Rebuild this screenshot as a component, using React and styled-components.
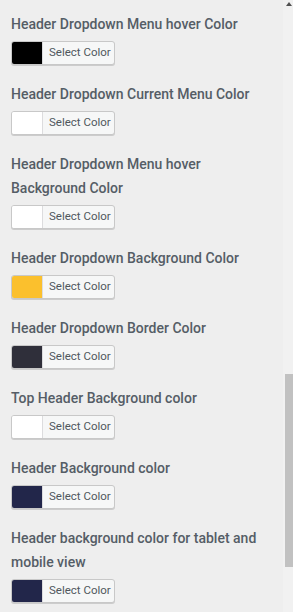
import React from 'react';
import styled, { createGlobalStyle } from 'styled-components';

const GlobalStyle = createGlobalStyle`
  html, body {
    margin: 0;
    padding: 0;
    background: #eeeeee;
  }
  body {
    font-family: Roboto, "Noto Sans", Arial, sans-serif;
  }
`;

const Frame = styled.div`
  display: flex;
  width: 293px;
  height: 612px;
  overflow: hidden;
`;

const Panel = styled.div`
  flex: 1;
  background: #eeeeee;
  padding: 12px 0 0 11px;
`;

const Control = styled.div`
  margin-bottom: 17px;
`;

const Label = styled.div`
  font-size: 14px;
  font-weight: 500;
  line-height: 24px;
  color: #555d66;
  padding-right: 10px;
`;

const ColorButton = styled.button`
  display: flex;
  align-items: stretch;
  box-sizing: border-box;
  margin: 5px 0 0;
  padding: 0;
  width: 104px;
  height: 24px;
  border: 1px solid #c8c8c8;
  border-radius: 3px;
  background: #f6f7f7;
  box-shadow: 0 1px 0 #cccccc;
  overflow: hidden;
  cursor: pointer;
`;

const Swatch = styled.span`
  width: 30px;
  background: ${p => p.$color};
  border-right: 1px solid #dcdcde;
`;

const ButtonText = styled.span`
  flex: 1;
  display: flex;
  align-items: center;
  padding-left: 6px;
  font-family: Roboto, Arial, sans-serif;
  font-size: 11.5px;
  line-height: 1;
  color: #50575e;
`;

const Track = styled.div`
  width: 10px;
  background: #f1f1f1;
  display: flex;
  flex-direction: column;
  align-items: flex-end;
`;

const Arrow = styled.div`
  margin: 2px 1px 0 0;
  width: 0;
  height: 0;
  border-left: 3px solid transparent;
  border-right: 3px solid transparent;
  border-bottom: 4px solid #505050;
`;

const Thumb = styled.div`
  margin-top: 368px;
  width: 8px;
  height: 193px;
  background: #c1c1c1;
`;

const controls = [
  { label: 'Header Dropdown Menu hover Color', color: '#000000' },
  { label: 'Header Dropdown Current Menu Color', color: '#ffffff' },
  { label: 'Header Dropdown Menu hover Background Color', color: '#ffffff' },
  { label: 'Header Dropdown Background Color', color: '#fbc02d' },
  { label: 'Header Dropdown Border Color', color: '#2f2f3a' },
  { label: 'Top Header Background color', color: '#ffffff' },
  { label: 'Header Background color', color: '#22264a' },
  { label: 'Header background color for tablet and mobile view', color: '#22264a' },
];

export default function App() {
  return (
    <>
      <GlobalStyle />
      <Frame>
        <Panel>
          {controls.map(c => (
            <Control key={c.label}>
              <Label>{c.label}</Label>
              <ColorButton type="button">
                <Swatch $color={c.color} />
                <ButtonText>Select Color</ButtonText>
              </ColorButton>
            </Control>
          ))}
        </Panel>
        <Track>
          <Arrow />
          <Thumb />
        </Track>
      </Frame>
    </>
  );
}
